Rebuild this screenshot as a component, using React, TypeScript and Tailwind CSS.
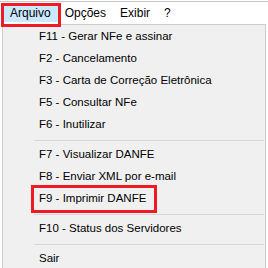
import React from "react";

type Entry = { label: string } | { sep: true };

const menus = ["Arquivo", "Opções", "Exibir", "?"];

const entries: Entry[] = [
  { label: "F11 - Gerar NFe e assinar" },
  { label: "F2 - Cancelamento" },
  { label: "F3 - Carta de Correção Eletrônica" },
  { label: "F5 - Consultar NFe" },
  { label: "F6 - Inutilizar" },
  { sep: true },
  { label: "F7 - Visualizar DANFE" },
  { label: "F8 - Enviar XML por e-mail" },
  { label: "F9 - Imprimir DANFE" },
  { sep: true },
  { label: "F10 - Status dos Servidores" },
  { sep: true },
  { label: "Sair" },
];

export default function App() {
  return (
    <div className="relative w-[268px] h-[268px] overflow-hidden bg-white font-['Liberation_Sans',Arial,sans-serif] text-[12px] text-[#000000]">
      {/* menu bar */}
      <div className="h-[23px] border-t border-[#c8c8c8] mt-[1px] flex items-center pl-[3px]">
        {menus.map((m, i) => (
          <div
            key={m}
            className={`h-[18px] flex items-center px-[7px] ${i === 0 ? "bg-[#cce8ff]" : ""}`}
          >
            {m}
          </div>
        ))}
      </div>

      {/* dropdown */}
      <div className="ml-[2px] w-[264px] h-[250px] border border-[#cccccc] bg-[#f0f0f0] pt-[1px] text-[11.5px]">
        {entries.map((e, i) =>
          "sep" in e ? (
            <div key={i} className="h-[8px] flex items-center pl-[31px] pr-[1px]">
              <div className="h-[1px] w-full bg-[#d7d7d7]" />
            </div>
          ) : (
            <div key={i} className="h-[22px] flex items-center pl-[36px]">
              {e.label}
            </div>
          )
        )}
      </div>

      {/* annotation boxes */}
      <div className="absolute left-[1px] top-[3px] w-[60px] h-[24px] border-[3px] border-[#ed1c24]" />
      <div className="absolute left-[31px] top-[185px] w-[126px] h-[28px] border-[3px] border-[#ed1c24]" />
    </div>
  );
}
